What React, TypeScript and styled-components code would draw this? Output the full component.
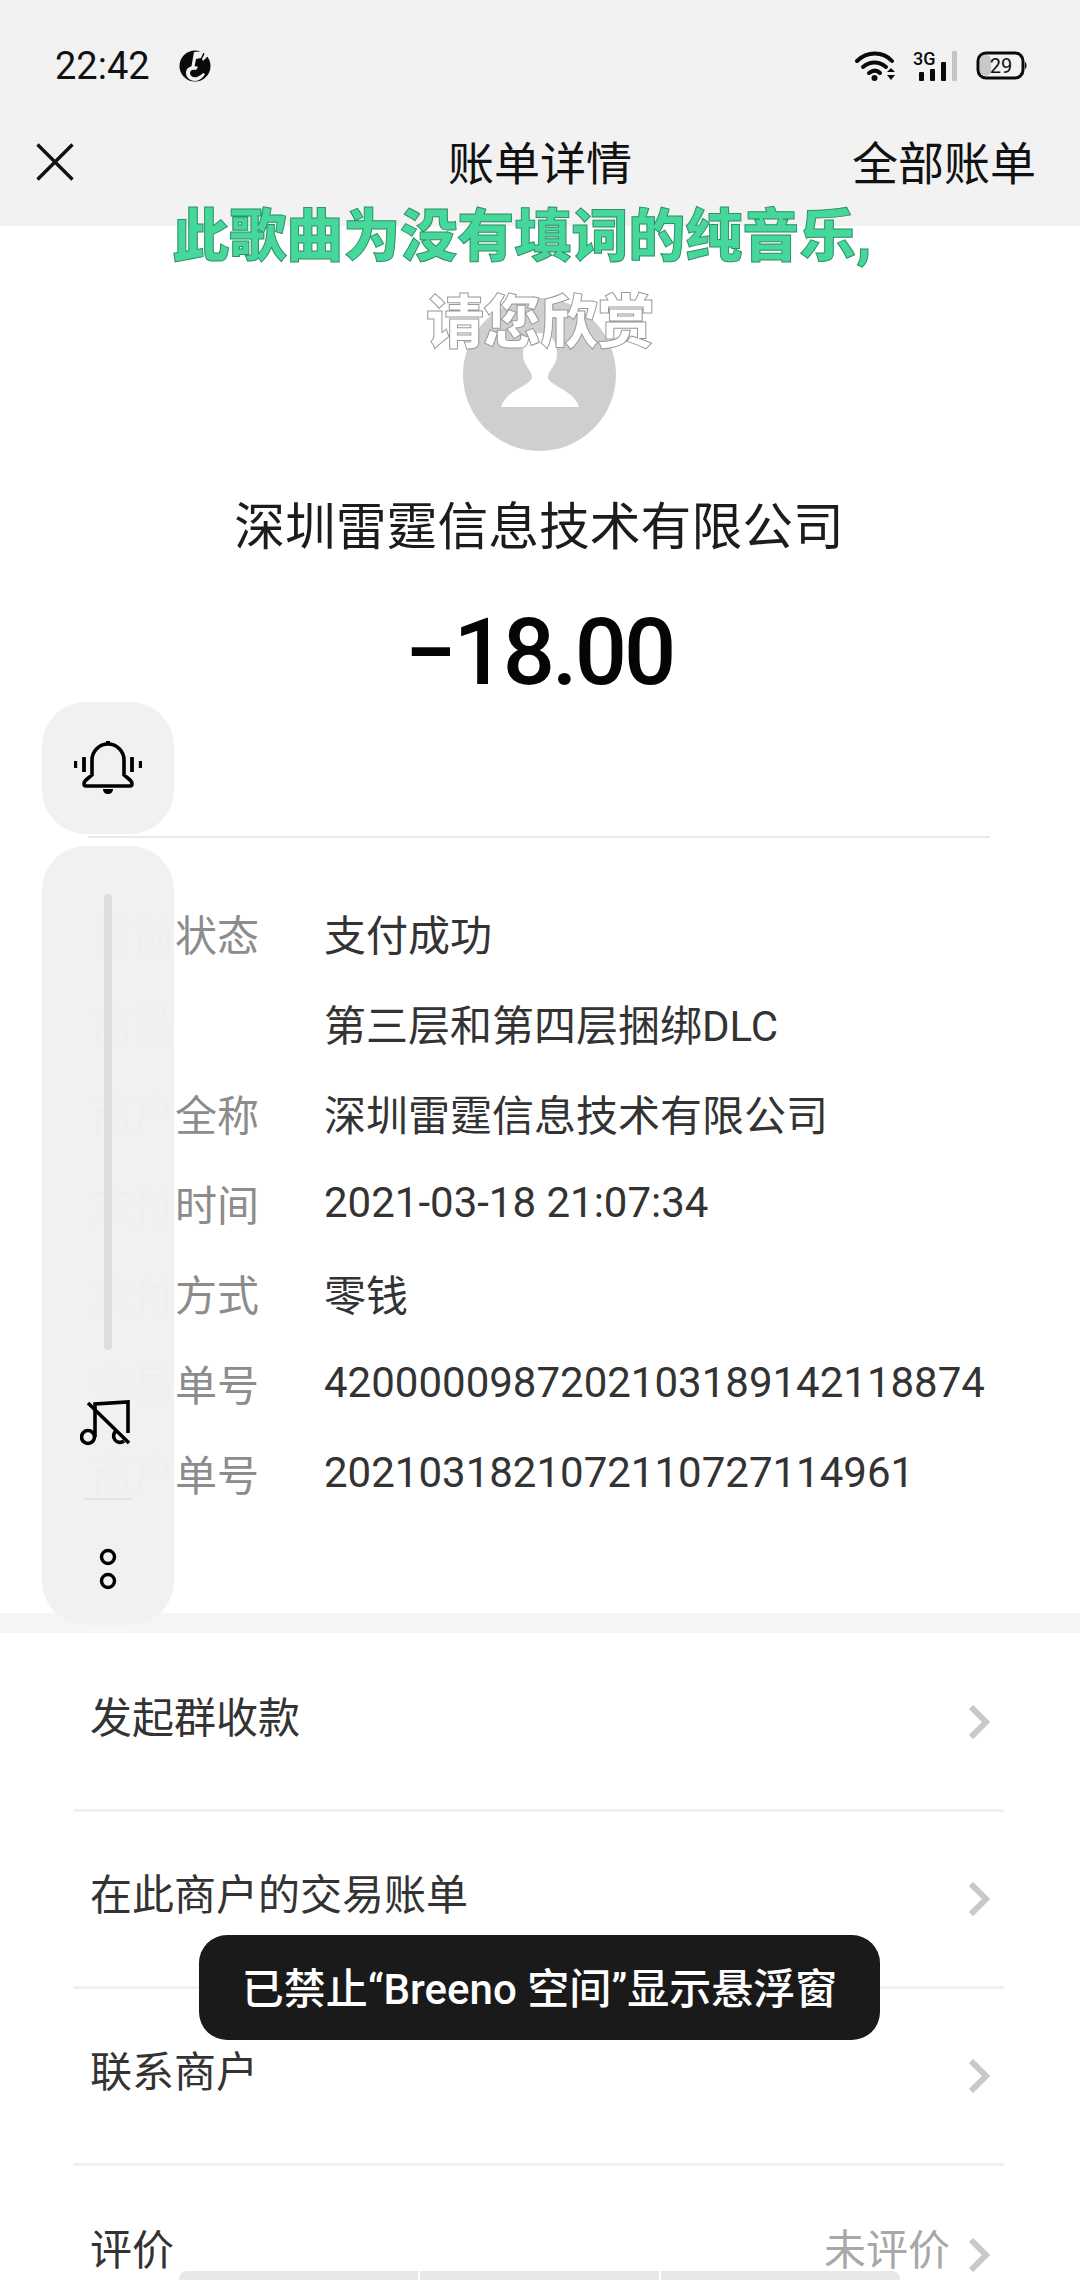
import styled, { createGlobalStyle } from "styled-components";

const GlobalStyle = createGlobalStyle`
  html, body {
    margin: 0;
    padding: 0;
    background: #fff;
  }
  * {
    box-sizing: border-box;
  }
`;

const Screen = styled.div`
  position: relative;
  width: 1080px;
  height: 2280px;
  overflow: hidden;
  background: #fff;
  color: #111;
  font-family: Roboto, "Noto Sans CJK SC", sans-serif;
`;

const Header = styled.header`
  height: 226px;
  background: #f2f2f2;
`;

const StatusBar = styled.div`
  height: 132px;
  padding: 0 52px 0 55px;
  display: flex;
  align-items: center;
  justify-content: space-between;
`;

const StatusLeft = styled.div`
  display: flex;
  align-items: center;
  gap: 29px;
  font-size: 38px;
`;

const StatusRight = styled.div`
  display: flex;
  align-items: center;
`;

const NavBar = styled.div`
  height: 56px;
  padding: 0 44px 0 36px;
  display: flex;
  align-items: center;
  justify-content: space-between;
  font-size: 46px;
`;

const CloseIcon = styled.svg`
  width: 38px;
  height: 38px;
  margin-top: 3px;
  display: block;
`;

const NavTitle = styled.div`
  position: absolute;
  left: 0;
  right: 0;
  text-align: center;
  pointer-events: none;
`;

const Summary = styled.section`
  height: 612px;
  padding-top: 72px;
  margin: 0 90px 0 88px;
  display: flex;
  flex-direction: column;
  align-items: center;
  border-bottom: 2px solid #e9e9e9;
`;

const Avatar = styled.svg`
  width: 153px;
  height: 153px;
  display: block;
`;

const Merchant = styled.div`
  margin-top: 42px;
  font-size: 50.8px;
  line-height: 70px;
  color: #1c1c1c;
`;

const Amount = styled.div`
  margin-top: 35px;
  font-size: 92px;
  line-height: 110px;
  font-weight: 500;
  letter-spacing: -3px;
  color: #050505;
`;

const Details = styled.section`
  height: 795px;
  padding: 49px 0 0 91px;
  border-bottom: 20px solid #f6f6f6;
`;

const DetailRow = styled.div`
  height: 90px;
  display: flex;
  align-items: center;
  font-size: 42px;
`;

const DetailLabel = styled.div`
  width: 233px;
  flex: none;
  color: #8c8c8c;
`;

const DetailValue = styled.div`
  color: #333;
  white-space: nowrap;
`;

const Menu = styled.section`
  padding: 2px 76px 0 74px;
`;

const MenuRow = styled.div`
  height: 177px;
  padding: 0 14px 16px 16px;
  display: flex;
  align-items: center;
  font-size: 42px;
  color: #333;
  border-bottom: 3px solid #f0f0f0;

  &:last-child {
    border-bottom: none;
  }
`;

const MenuLabel = styled.div`
  flex: 1;
`;

const MenuHint = styled.div`
  color: #a8a8a8;
  margin-right: 18px;
`;

const Chevron = styled.svg`
  width: 22px;
  height: 34px;
  margin-top: 16px;
  display: block;
`;

const LyricOverlay = styled.div`
  position: absolute;
  top: 200px;
  left: 0;
  right: 0;
  text-align: center;
  font-weight: 900;
  pointer-events: none;
`;

const LyricLine = styled.div<{ $sung?: boolean }>`
  height: ${(p) => (p.$sung ? "86px" : "83px")};
  padding-right: ${(p) => (p.$sung ? "36px" : "0")};
  font-size: ${(p) => (p.$sung ? "57px" : "58px")};
  line-height: 74px;
  color: ${(p) => (p.$sung ? "#45d89a" : "#fff")};
  -webkit-text-stroke: 1px ${(p) => (p.$sung ? "#2f8f68" : "#9a9a9a")};
  letter-spacing: ${(p) => (p.$sung ? "0" : "-1px")};
`;

const FloatBar = styled.div`
  position: absolute;
  left: 42px;
  width: 132px;
  display: flex;
  flex-direction: column;
  align-items: center;
  background: rgba(241, 241, 241, 0.98);
  border-radius: 44px;
`;

const BellPanel = styled(FloatBar)`
  top: 702px;
  height: 132px;
  justify-content: center;
`;

const ControlPanel = styled(FloatBar)`
  top: 846px;
  height: 779px;
  padding-top: 48px;
`;

const Scrubber = styled.div`
  width: 8px;
  height: 456px;
  border-radius: 4px;
  background: #dedede;
`;

const MusicOff = styled.svg`
  width: 56px;
  height: 46px;
  margin-top: 50px;
  display: block;
`;

const PanelRule = styled.div`
  width: 48px;
  height: 2px;
  margin-top: 52px;
  background: #e2e2e2;
`;

const Dots = styled.svg`
  width: 20px;
  height: 44px;
  margin-top: 47px;
  display: block;
`;

const Toast = styled.div`
  position: absolute;
  top: 1935px;
  left: 199px;
  width: 681px;
  height: 105px;
  padding-bottom: 4px;
  display: flex;
  align-items: center;
  justify-content: center;
  border-radius: 28px;
  background: #1a1a1a;
  color: #fff;
  font-size: 42px;
  font-weight: 500;
  white-space: nowrap;
`;

const BottomTabs = styled.div`
  position: absolute;
  left: 179px;
  bottom: 0;
  width: 721px;
  height: 9px;
  display: flex;
  gap: 2px;
  border-radius: 8px 8px 0 0;
  overflow: hidden;
`;

const BottomTab = styled.div`
  flex: 1;
  background: #e8e8e8;
`;

const details = [
  ["当前状态", "支付成功"],
  ["商品", "第三层和第四层捆绑DLC"],
  ["商户全称", "深圳雷霆信息技术有限公司"],
  ["支付时间", "2021-03-18 21:07:34"],
  ["支付方式", "零钱"],
  ["交易单号", "4200000987202103189142118874"],
  ["商户单号", "2021031821072110727114961"],
];

const menu = [
  { label: "发起群收款" },
  { label: "在此商户的交易账单" },
  { label: "联系商户" },
  { label: "评价", hint: "未评价" },
];

const App = () => {
  return (
    <Screen>
      <GlobalStyle />
      <Header>
        <StatusBar>
          <StatusLeft>
            <span>22:42</span>
            <svg width="32" height="34" viewBox="0 0 32 34">
              <circle cx="16" cy="17" r="15.5" fill="#0a0a0a" />
              <path d="M15 3l10-1-3 7-5 1-2 10h-3z" fill="#f2f2f2" />
              <path d="M7 24c0-5 4-7 8-7 2 0 4 1 4 1l-2 3c-3-1-6 0-6 3s3 5 7 4c3-1 5-3 6-4l2 1c-2 4-6 7-10 7s-9-3-9-8z" fill="#f2f2f2" />
              <path d="M26 4l3 3-5 5-1-2z" fill="#f2f2f2" />
            </svg>
          </StatusLeft>
          <StatusRight>
            <svg width="44" height="32" viewBox="0 0 44 32">
              <path d="M2 11C12 1 28 1 37 11" fill="none" stroke="#0a0a0a" strokeWidth="4" strokeLinecap="round" />
              <path d="M8 17c7-6 16-6 23 0" fill="none" stroke="#0a0a0a" strokeWidth="4" strokeLinecap="round" />
              <path d="M14 23c4-3 8-3 11 0" fill="none" stroke="#0a0a0a" strokeWidth="4" strokeLinecap="round" />
              <circle cx="19.5" cy="28" r="3" fill="#0a0a0a" />
              <path d="M32 22l4-4 4 4zM32 25l4 5 4-5z" fill="#0a0a0a" />
            </svg>
            <svg width="46" height="36" viewBox="0 -2 46 36" style={{ marginLeft: 14 }}>
              <text x="0" y="15" fontSize="18" fontWeight="500" fontFamily="Roboto" fill="#0a0a0a">3G</text>
              <rect x="6" y="22" width="5" height="9" rx="1" fill="#0a0a0a" />
              <rect x="17" y="19" width="5" height="12" rx="1" fill="#0a0a0a" />
              <rect x="28" y="12" width="5" height="19" rx="1" fill="#0a0a0a" />
              <rect x="39" y="1" width="5" height="30" rx="1" fill="#c4c4c4" />
            </svg>
            <svg width="52" height="30" viewBox="0 0 52 30" style={{ marginLeft: 17 }}>
              <rect x="2" y="2" width="45" height="25" rx="8" fill="#f2f2f2" stroke="#0a0a0a" strokeWidth="3" />
              <rect x="4" y="4" width="11" height="21" rx="5" fill="#c8c8c8" />
              <path d="M49 11c2 1 2 6 0 7z" fill="#0a0a0a" />
              <text x="25" y="22" fontSize="20" fontFamily="Roboto" textAnchor="middle" fill="#111">29</text>
            </svg>
          </StatusRight>
        </StatusBar>
        <NavBar>
          <CloseIcon viewBox="0 0 38 38">
            <path d="M1.5 1.5l35 35M36.5 1.5l-35 35" stroke="#111" strokeWidth="3.4" fill="none" />
          </CloseIcon>
          <NavTitle>账单详情</NavTitle>
          <span>全部账单</span>
        </NavBar>
      </Header>

      <Summary>
        <Avatar viewBox="0 0 153 153">
          <circle cx="76.5" cy="76.5" r="76.5" fill="#cfcfcf" />
          <path
            d="M77 35C88 35 94 44 94 56C94 68 85 72 85 79C85 85 100 90 109 98C113 102 115 106 116 109H38C39 106 41 102 45 98C54 90 69 85 69 79C69 72 60 68 60 56C60 44 66 35 77 35Z"
            fill="#fff"
          />
        </Avatar>
        <Merchant>深圳雷霆信息技术有限公司</Merchant>
        <Amount>−18.00</Amount>
      </Summary>

      <Details>
        {details.map(([label, value]) => (
          <DetailRow key={label}>
            <DetailLabel>{label}</DetailLabel>
            <DetailValue>{value}</DetailValue>
          </DetailRow>
        ))}
      </Details>

      <Menu>
        {menu.map((item) => (
          <MenuRow key={item.label}>
            <MenuLabel>{item.label}</MenuLabel>
            {item.hint && <MenuHint>{item.hint}</MenuHint>}
            <Chevron viewBox="0 0 22 34">
              <path d="M3 2l15 15L3 32" fill="none" stroke="#c8c8c8" strokeWidth="6" />
            </Chevron>
          </MenuRow>
        ))}
      </Menu>

      <LyricOverlay>
        <LyricLine $sung>此歌曲为没有填词的纯音乐,</LyricLine>
        <LyricLine>请您欣赏</LyricLine>
      </LyricOverlay>

      <BellPanel>
        <svg width="68" height="56" viewBox="0 0 68 56">
          <path
            d="M18 20a16 16 0 0 1 32 0V35l6 5q2 1.5 2 4q0 2-2 2H12q-2 0-2-2q0-2.5 2-4l6-5z"
            fill="none"
            stroke="#000"
            strokeWidth="3.6"
          />
          <path d="M32 1h4v3h-4zM29 49h10c0 3-2 5-5 5s-5-2-5-5z" fill="#000" />
          <path d="M10 17v15M58 17v15" stroke="#000" strokeWidth="3.8" />
          <path d="M1.5 21v7M66.5 21v7" stroke="#000" strokeWidth="3.4" />
        </svg>
      </BellPanel>

      <ControlPanel>
        <Scrubber />
        <MusicOff viewBox="0 0 56 46">
          <path d="M15 37V4l33-2v31" fill="none" stroke="#000" strokeWidth="3.6" />
          <circle cx="8" cy="37" r="6.5" fill="none" stroke="#000" strokeWidth="3.6" />
          <path d="M36 31a6 6 0 0 0 8 10" fill="none" stroke="#000" strokeWidth="3.6" />
          <path d="M8 3l41 40" stroke="#000" strokeWidth="3.6" />
        </MusicOff>
        <PanelRule />
        <Dots viewBox="0 0 20 44">
          <circle cx="10" cy="10" r="6.5" fill="none" stroke="#000" strokeWidth="3.4" />
          <circle cx="10" cy="34" r="6.5" fill="none" stroke="#000" strokeWidth="3.4" />
        </Dots>
      </ControlPanel>

      <Toast>已禁止“Breeno 空间”显示悬浮窗</Toast>

      <BottomTabs>
        <BottomTab />
        <BottomTab />
        <BottomTab />
      </BottomTabs>
    </Screen>
  );
};

export default App;
